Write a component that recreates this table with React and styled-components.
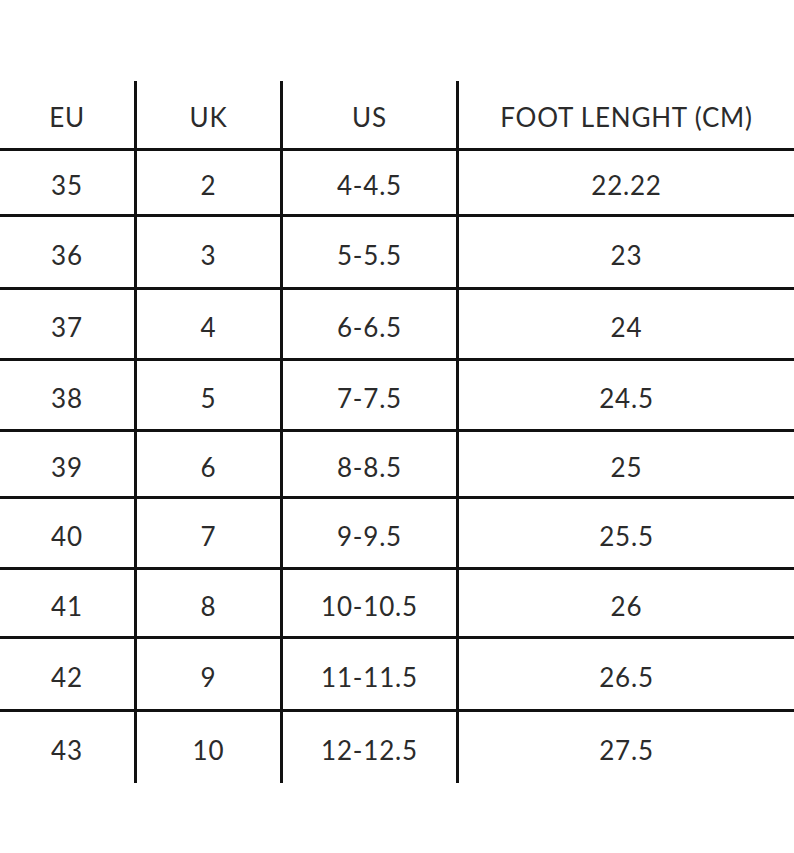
import React from "react";
import styled, { createGlobalStyle } from "styled-components";

const GlobalStyle = createGlobalStyle`
  html, body {
    margin: 0;
    padding: 0;
    background: #ffffff;
  }
  * {
    box-sizing: border-box;
  }
`;

const headers = ["EU", "UK", "US", "FOOT LENGHT (CM)"];

const rows = [
  { h: 63, cells: ["35", "2", "4-4.5", "22.22"] },
  { h: 70, cells: ["36", "3", "5-5.5", "23"] },
  { h: 68, cells: ["37", "4", "6-6.5", "24"] },
  { h: 68, cells: ["38", "5", "7-7.5", "24.5"] },
  { h: 64, cells: ["39", "6", "8-8.5", "25"] },
  { h: 68, cells: ["40", "7", "9-9.5", "25.5"] },
  { h: 66, cells: ["41", "8", "10-10.5", "26"] },
  { h: 70, cells: ["42", "9", "11-11.5", "26.5"] },
  { h: 71, cells: ["43", "10", "12-12.5", "27.5"] },
];

function App() {
  return (
    <Page>
      <GlobalStyle />
      <Chart>
        <Row $height={67} $header>
          {headers.map((h) => (
            <Cell key={h}>{h}</Cell>
          ))}
        </Row>
        {rows.map((r) => (
          <Row key={r.cells[0]} $height={r.h}>
            {r.cells.map((c, i) => (
              <Cell key={i}>{c}</Cell>
            ))}
          </Row>
        ))}
      </Chart>
    </Page>
  );
}

const Page = styled.div`
  width: 794px;
  height: 853px;
  padding-top: 81px;
  background: #fff;
`;

const Chart = styled.div`
  display: flex;
  flex-direction: column;
  width: 100%;
`;

const Row = styled.div`
  display: grid;
  grid-template-columns: 134px 146px 176px 1fr;
  height: ${(p) => p.$height + (p.$header ? 0 : 3)}px;
  border-top: ${(p) => (p.$header ? "none" : "3px solid #111")};
`;

const Cell = styled.div`
  display: flex;
  align-items: center;
  justify-content: center;
  padding-top: 5px;
  font-family: Lato, "Open Sans", sans-serif;
  font-size: 26px;
  font-weight: 400;
  letter-spacing: 0.8px;
  color: #2b2b2b;
  white-space: nowrap;

  & + & {
    border-left: 3px solid #111;
  }
`;

export default App;
